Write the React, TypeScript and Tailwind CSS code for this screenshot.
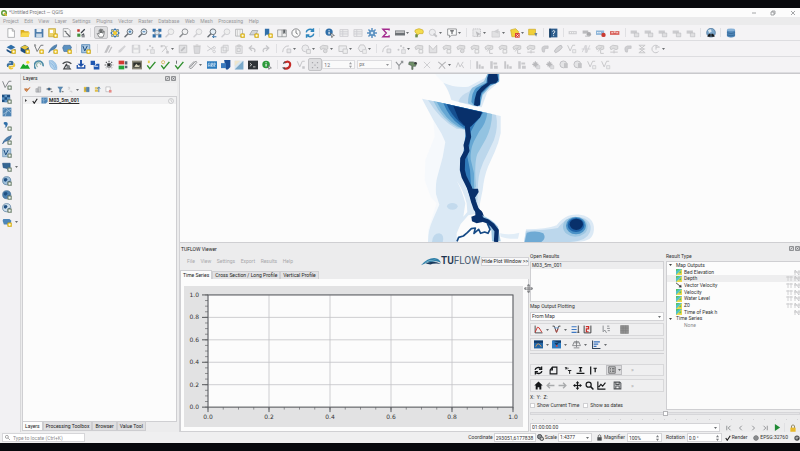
import type { ReactNode } from "react";

const B = "#2f6ea8";
const N = "#1f4f82";
const Y = "#f0c92c";
const G = "#c6c6c9";

const Badge = ({ fill = Y, stroke = "#b8961a" }: { fill?: string; stroke?: string }) => (
  <>
    <rect x="9" y="9" width="6.5" height="6.5" rx="1.2" fill={fill} stroke={stroke} strokeWidth=".8" />
    <path d="M12.2 10.5v3.6M10.4 12.3h3.6" stroke="#fff" strokeWidth="1.2" />
  </>
);
const GreyBadge = () => <Badge fill="#8fa08f" stroke="#6d7d6d" />;
const Lens = ({ c = "#6b7177", f = "#e4eef6" }: { c?: string; f?: string }) => (
  <>
    <circle cx="9.5" cy="6" r="4.6" fill={f} stroke={c} strokeWidth="1.5" />
    <path d="M6 9.5 1.6 14" stroke={c} strokeWidth="2.4" strokeLinecap="round" />
  </>
);
const Blob = ({ children }: { children?: ReactNode }) => (
  <g fill="none" stroke={G} strokeWidth="1.5">
    <path d="M1.5 5 6 2l8 1v5l-3 1-4-2-4 2z" fill="#dededf" />
    {children}
  </g>
);
const Tick = ({ children }: { children?: ReactNode }) => (
  <>
    <path d="M2 8.5 6 14 15 3" fill="none" stroke="#2f8f2d" strokeWidth="2.2" />
    {children}
  </>
);
const Globe = ({ f = "#9fc0da" }: { f?: string }) => (
  <>
    <circle cx="7.5" cy="7.5" r="6.5" fill={f} stroke="#3d688f" />
    <path d="M3 4l4-1 2 3-3 3-3-1zM9 9l4-2-1 5-3 1z" fill={N} />
  </>
);

const icons: Record<string, ReactNode> = {
  new: <path d="M3 1h7l3.5 3.5V15H3zM10 1v4h3.5" fill="#fff" stroke="#8b8d90" strokeWidth="1" />,
  open: <><path d="M1 3h5l1.5 2H14v9H1z" fill="#d8ab1e" /><path d="M3 7h13l-2.5 7H1z" fill="#f7d84a" /></>,
  save: <><path d="M1 1.5h14V15H1z" fill="#4c7cab" /><path d="M4 1.5h8v5H4z" fill="#e9eff5" /><path d="M3.5 9h9v6h-9z" fill="#c9d8e6" /></>,
  layout: <><path d="M1 1h11v13H1z" fill="#ecd36a" stroke="#b99b28" /><path d="M3 3h5v5H3z" fill="#fff" /><Badge /></>,
  layoutMgr: <><path d="M2 1h8l3 3v10H2z" fill="#f7f7f7" stroke="#85888b" /><path d="M6 7l7 7M4 5l3 1" stroke="#686b6e" strokeWidth="2" /></>,
  style: <><path d="M2 2h4v4H2z" fill="#c2352b" /><path d="M2 9h5v5H2z" fill="#42903f" /><path d="M8 8l6-6M9 12l4-3" stroke="#3b4148" strokeWidth="2" /><path d="M9 11h5v4H9z" fill="#8a8d90" /></>,
  hand: <path d="M5 14.5 2 9l1-1 2 2V3.5l1.3-.6L7 8V1.8h1.5V8l1-5.6 1.4.4L10.700 8.500 12 5l1.300.4L12.500 11 11 14.500z" fill="#fff" stroke="#46494c" strokeWidth="1" />,
  panSel: <><path d="M8 0l2.500 3.500h-5zM8 16l2.500-3.500h-5zM0 8l3.500-2.500v5zM16 8l-3.500-2.500v5z" fill={B} /><path d="M5 5h6v6H5z" fill={Y} /><path d="M2 2h4v4H2zM10 2h4v4h-4zM2 10h4v4H2zM10 10h4v4h-4z" fill="#54788f" /><path d="M3 3h2v2H3zM11 3h2v2h-2zM3 11h2v2H3zM11 11h2v2h-2z" fill="#e7d35e" /></>,
  zoomIn: <><Lens /><path d="M9.500 3.800v4.400M7.300 6h4.400" stroke={B} strokeWidth="1.400" /></>,
  zoomOut: <><Lens /><path d="M7.300 6h4.400" stroke={B} strokeWidth="1.400" /></>,
  zoomFull: <><path d="M1 1h5v5H1zM10 1h5v5h-5zM10 10h5v5h-5zM1 10h5v5H1z" fill={B} /><circle cx="8" cy="7.500" r="3.600" fill="#dce8f2" stroke="#6b7177" /></>,
  lensG: <Lens c="#cfcfd2" f="#eee" />,
  lens: <Lens c="#8b8e91" f="#f1f1f2" />,
  zoomLast: <><Lens /><path d="M15 14H9l2.500-3M9 14l2.500 2" stroke={B} strokeWidth="1.500" fill="none" /></>,
  newMap: <><path d="M1 2h11v11H1z" fill="#f3f3f3" stroke="#9a9c9e" /><path d="M4 2v11M8 2v11" stroke="#c0c0c0" /><Badge /></>,
  new3d: <><path d="M1 11 5 4h9l-3 7z" fill="#d4d5d7" stroke="#909396" /><Badge /></>,
  bookmark: <><path d="M3 1h7v12l-3.500-3L3 13z" fill={B} /><Badge /></>,
  marks: <><path d="M1 3h14v11H1z" fill="#eee" stroke="#7b7e81" /><path d="M8 3v11M10 3h3v6l-1.500-1.500L10 9z" fill="#53575b" stroke="#7b7e81" /></>,
  clock: <><circle cx="8" cy="8" r="6.600" fill="#fafafa" stroke="#77797c" strokeWidth="1.400" /><path d="M8 3.500V8l3 2" fill="none" stroke="#55585b" strokeWidth="1.200" /></>,
  refresh: <path d="M2 7a6 5.500 0 0 1 10.500-3M14 9a6 5.500 0 0 1-10.500 3M13.500.5V5H9M2.500 15.500V11H7" fill="none" stroke="#2f86bd" strokeWidth="2.400" />,
  identify: <><circle cx="6.500" cy="6.500" r="5.800" fill={B} /><path d="M6.500 3v1.500M6.500 6v4" stroke="#fff" strokeWidth="1.800" /><path d="M9 8l6 4-3 .5-1 3z" fill="#fff" stroke="#4c4f52" /></>,
  tableG: <path d="M1.500 2.500h13v11h-13zM1.500 6h13M1.500 9.500h13M6 2.500v11" fill="#ececee" stroke="#cfcfd2" strokeWidth="1.400" />,
  gear: <><path d="M8 0v16M0 8h16M2.300 2.300l11.400 11.400M13.700 2.300 2.300 13.700" stroke="#5e93c2" strokeWidth="2.400" /><circle cx="8" cy="8" r="5" fill="#5e93c2" /><circle cx="8" cy="8" r="2" fill="#dceaf5" /></>,
  sigma: <path d="M13 4V2H3l5.500 6L3 14h10v-2.500" fill="none" stroke="#a3298d" strokeWidth="2.200" />,
  ruler: <><path d="M0 4h16v8H0z" fill="#6d7175" /><path d="M1 6.500h14" stroke="#e4e4e4" strokeWidth="2" /></>,
  tip: <><path d="M2 3q6-4 12 0 2 3 0 6H8l-4 5V9Q0 6 2 3z" fill="#f4dc4d" stroke="#c8a92a" /><path d="M2 10h4v5H2z" fill="#6d8b4c" /></>,
  annG: <><circle cx="7" cy="7" r="5" fill="#ededef" stroke="#cbcbce" strokeWidth="1.500" /><path d="M9 9l5 5" stroke="#c3c3c6" strokeWidth="3" /></>,
  text: <><path d="M1 1.500h14v10H7l-3 3.500v-3.500H1z" fill="#fbfbfb" stroke="#7c7f82" strokeWidth="1.200" /><path d="M5 4.500h6M8 4.500v5" stroke="#3c3f42" strokeWidth="1.500" /></>,
  selG: <><path d="M1.500 1.500h12v12h-12z" fill="#e9e9eb" stroke="#c2c2c5" strokeDasharray="2 1" strokeWidth="1.500" /><path d="M6 5l8 5-4 1-1 4z" fill="#b9b9bc" /></>,
  formG: <><path d="M1.500 5.500h12v9h-12z" fill="#e1e1e3" stroke="#c9c9cc" /><path d="M4 5.500 12 1v8z" fill="#cfcfd2" /></>,
  desel: <><path d="M1 3l8-2 5 5-4 8H3z" fill="#f2d23a" stroke="#c7a524" /><path d="M8 8h7.500v7.500H8z" fill="#d94136" /><path d="M10 10l4 4M14 10l-4 4" stroke="#fff" /></>,
  selLoc: <><path d="M1 2h11v9H1z" fill="#f0cf38" stroke="#c7a524" /><path d="M10 8h5l-2 6z" fill="#6d8197" /></>,
  help: <><path d="M2 1h13v14H2z" fill="#2c5c8c" /><path d="M2 1h2.500v14H2z" fill="#173b61" /><path d="M7 5.500q2.500-3 4 0 0 2-2 2.500v2M9 11.500v1.500" stroke="#fff" strokeWidth="1.400" fill="none" /></>,
  labG: <><path d="M1 5h13v5H1z" fill="#cdcdd0" /><path d="M3 7.500h2M6.500 7.500h2M10 7.500h2" stroke="#f3f3f3" strokeWidth="2" /></>,
  pinG: <><path d="M1 4h9v5H1z" fill="#bababd" /><circle cx="11" cy="10" r="3.500" fill="#a9a9ac" /><path d="M5 12h7v2H5z" fill="#c4c4c7" /></>,
  labBlue: <><path d="M0 4h13v7H0z" fill="#8cb4d8" /><path d="M2 7.500h2M5.500 7.500h2" stroke="#fff" strokeWidth="2" /><circle cx="12" cy="11" r="3.500" fill="#c93a31" /></>,
  labRed: <><path d="M0 5h15v6H0z" fill="#d7605a" /><path d="M2 7.500h3M6 6.500h3M10 7.500h3" stroke="#fbe3e1" strokeWidth="1.800" /></>,
  labG2: <><path d="M1 4h10v5H1z" fill="#cbcbce" /><path d="M7 8h7v6H7z" fill="#dfdfe1" stroke="#bcbcbf" /></>,
  earthFind: <><circle cx="8" cy="7.500" r="7" fill="#7ba6cb" stroke="#446e95" /><path d="M3 3l5-1 1 4-4 2z" fill="#d8e5ef" /><path d="M2 14l2.500-5h3v5zM14 14l-2.500-5h-3v5z" fill="#17191b" /></>,
  db: <><path d="M1.500 3v10q6.500 4 13 0V3z" fill="#4f86b8" /><ellipse cx="8" cy="3" rx="6.500" ry="2.300" fill="#86b1d7" /><path d="M1.500 7.500q6.500 3 13 0M1.500 11q6.500 3 13 0" fill="none" stroke="#2d5f8d" /></>,

  dsm: <><path d="M1 5 8 1l7 4-7 4z" fill={B} /><path d="M1 8l7 4 7-4v3l-7 4-7-4z" fill={N} /><Badge /></>,
  geopkg: <><path d="M1 5 8 1l6 4v6l-6 4-7-4z" fill={N} /><path d="M1 5 8 2l6 3-6 4z" fill="#e8c63a" /><Badge /></>,
  shape: <><path d="M1 2l4 10 6-10h4" fill="none" stroke="#5c6064" strokeWidth="1.300" /><circle cx="1.500" cy="2" r="1.200" fill="#fff" stroke="#5c6064" /><Badge /></>,
  feather: <><path d="M1 14Q4 4 14 1q0 7-9 9z" fill="#5187b5" stroke={N} strokeWidth=".8" /><Badge /></>,
  memory: <><path d="M3 2h10l2 3-2 7H3L1 6z" fill="#5b91c0" stroke={N} strokeWidth=".7" /><Badge /></>,
  virtual: <><path d="M1 1h13v13H1z" fill="#aac7e0" stroke={B} /><path d="M3 3l3 8 4-8" fill="none" stroke={N} strokeWidth="1.600" /><Badge /></>,
  pencilsG: <path d="M2 14 8 2h4L6 14zM8 14l5-10 2 1-5 9z" fill="#c0c0c3" />,
  pencilG: <path d="M2 14l1-4L12 2l2 2-8 9z" fill="#d3d3d6" />,
  saveG: <><path d="M2 2h12v12H2z" fill="#dadadc" stroke="#c4c4c7" /><path d="M5 2h6v4H5zM4 9h8v5H4z" fill="#f3f3f3" /></>,
  ptsG: <><circle cx="4" cy="9" r="1.600" fill={G} /><circle cx="8" cy="3" r="1.600" fill={G} /><circle cx="12" cy="6" r="1.600" fill={G} /><path d="M9 9h6v6H9z" fill="#e8e8ea" stroke={G} /></>,
  vertG: <><path d="M2 3h6l4 9M3 13l9-10" fill="none" stroke={G} strokeWidth="1.500" /><path d="M1 2h3v3H1zM10 11h4v4h-4z" fill={G} /></>,
  multiG: <><path d="M2 2h12v12H2z" fill="#e1e1e3" stroke={G} strokeWidth="1.500" /><path d="M5 11l6-6" stroke="#bdbdc0" strokeWidth="2.500" /></>,
  trashG: <path d="M3 4h10l-1 11H4zM2 3h12M6 1.500h4" fill="#d9d9dc" stroke={G} strokeWidth="1.300" />,
  cutG: <path d="M2 3l9 7M2 11l10-6M13 10a2 2 0 1 0 .1 0M13 4a2 2 0 1 0 .1 0" fill="none" stroke={G} strokeWidth="1.400" />,
  copyG: <path d="M5 2h8v9H5zM2 5h8v9H2z" fill="#ececee" stroke={G} strokeWidth="1.300" />,
  pasteG: <path d="M3 3h10v12H3zM6 1.500h4v3H6zM5 7h5v5H5z" fill="#e8e8ea" stroke={G} strokeWidth="1.300" />,
  undoG: <path d="M12 13q3-7-7-6.500M8 2.500 3.500 6.500 8 11" fill="none" stroke={G} strokeWidth="2" />,
  redoG: <path d="M4 13q-3-7 7-6.500M8 2.500l4.500 4L8 11" fill="none" stroke={G} strokeWidth="2" />,
  arcG: <><path d="M1 13Q2 3 11 3" fill="none" stroke={G} strokeWidth="1.600" /><path d="M8 8h6v6H8z" fill="#e8e8ea" stroke={G} strokeWidth="1.400" /></>,
  circG: <><circle cx="7" cy="7" r="5.500" fill="#ececee" stroke={G} strokeWidth="1.400" /><path d="M9 9h6v6H9z" fill="#eee" stroke={G} strokeWidth="1.400" /></>,
  rectG: <><path d="M1.500 3h12v9h-12z" fill="#ececee" stroke={G} strokeWidth="1.500" /><path d="M8 8h7v7H8z" fill="#eee" stroke={G} strokeWidth="1.400" /></>,
  ngonG: <><path d="M5 1.500h6l3 5-3 5.500H5L2 7z" fill="#ececee" stroke={G} strokeWidth="1.500" /><path d="M9 9h6v6H9z" fill="#eee" stroke={G} /></>,
  blob: <Blob><path d="M8 9h6v5.500H8z" fill="#f2f2f2" /></Blob>,
  blob2: <Blob><path d="M5 12l6-8" /><path d="M9 9v6h5" /></Blob>,
  blob3: <Blob><circle cx="10" cy="11" r="3" fill="#dcdcde" /></Blob>,
  blob4: <Blob><path d="M2 13h12M8 9v6" /></Blob>,
  triG: <path d="M2 2v12h12V2L8 9z" fill="#e1e1e3" stroke={G} strokeWidth="1.500" />,
  capG: <path d="M3 9q-1-5 4-6h6v4H8l-1 6q-4 1-4-4z" fill="#cfcfd2" stroke="#bdbdc0" />,
  bandG: <path d="M4 14Q0 12 5 7t8-5q4 3-1 7t-8 5z" fill="#d5d5d8" stroke="#b9b9bc" strokeWidth="1.300" />,
  vG: <><path d="M1 2l4 9 4-9h4" fill="none" stroke={G} strokeWidth="1.500" /><path d="M9 9h5v5H9z" fill="#eee" stroke={G} /></>,
  splitG: <path d="M2 13 7 2v12M9 2v12l5-12M1 8h14" fill="none" stroke="#cfcfd2" strokeWidth="1.400" />,
  hourG: <path d="M3 2h10L5 8l8 6H3l8-6zM3 8h10" fill="none" stroke={G} strokeWidth="1.500" />,
  rotG: <path d="M12 12A6 6 0 1 1 12 4M8 3v6M8 5h6" fill="none" stroke={G} strokeWidth="1.600" />,

  python: <><path d="M8 1q4 0 4 3v4H6q-2 0-2 3H2Q0 7 3 5h5V4H4q0-3 4-3z" fill="#3a6f9e" /><path d="M8 15q-4 0-4-3V9h6q2 0 2-4h2q2 5-1 6H8v1h4q0 3-4 3z" fill="#edc83c" /></>,
  hill: <><path d="M0 14 5 6l4 3 3-2 4 7z" fill="#18a826" /><circle cx="12.500" cy="3.500" r="2.500" fill="#f1dc34" /></>,
  swirl: <><path d="M3 14A7 7 0 1 1 14.500 10" fill="none" stroke="#4d8ba6" strokeWidth="2.600" /><path d="M6 11a3.500 3.500 0 1 1 5-3" fill="none" stroke="#94b8ad" strokeWidth="2" /></>,
  flow: <path d="M2 1h5q8 4 7 14H9Q2 12 2 1zM3 4q6 3 8 10M6 2q6 4 7 11" fill="#b5d3ec" stroke="#7aaeda" />,
  gauge: <><path d="M1 6q7-6 14 0M3 14 7 7l6 7z" fill="none" stroke="#45484b" strokeWidth="2" /><circle cx="10" cy="11" r="3" fill="#7b7f83" /></>,
  dl: <path d="M6.500 0h3v6h4L8 11 2.500 6h4zM1 8v6h14V8h-2v3.500H3V8z" fill="#1b4fa8" />,
  imp: <><path d="M1 1h7v7H1zM6 6h9v9H6z" fill="#1d56b1" /><path d="M12 3 7 10h6" fill="none" stroke="#e7eefa" strokeWidth="1.500" /></>,
  nodes: <><path d="M8 1v14M1 8h14M3 3l10 10M13 3 3 13" stroke="#4b4e51" strokeDasharray="2 1.400" strokeWidth="1.700" /><circle cx="8" cy="8" r="2.500" fill="#2a2c2e" /></>,
  stack: <><path d="M1 1h9v6H1z" fill="#d23a32" /><path d="M1 9h9v6H1z" fill="#24a33a" /><path d="M11 2h4v5h-4zM11 9h4v4h-4z" fill="#556371" /></>,
  photo: <><path d="M0 1h16v14H0z" fill="#8a8778" /><path d="M2 4h12v8H2z" fill="#2e302c" /><path d="M4 10l3-4 3 3 2-2v4H4z" fill="#d5d0b8" /></>,
  t1: <Tick><path d="M3 1h3v4H3z" fill="#e6cd4d" /></Tick>,
  t2: <Tick><circle cx="5" cy="3.500" r="2.500" fill="none" stroke="#cfa32d" /></Tick>,
  t3: <Tick><path d="M4 1v5" stroke="#55595c" strokeWidth="1.300" /></Tick>,
  clip: <path d="M3 12 11 3q3-2 3 1L6 13q-3 2-4-1 0-2 2-4l6-6" fill="none" stroke="#8f9194" strokeWidth="1.500" />,
  arr: <><path d="M0 2h16v12H0z" fill="#2c7bbd" /><path d="M2 11V6l1.500-1.500L5 6v5M2 9h3M7 11V5h2v3H7l2 3M11 11V5h2v3h-2l2 3" fill="none" stroke="#e2effa" /></>,
  blue2: <><path d="M5 0h10v11l-4 4H8z" fill="#1c4f97" /><path d="M0 5h8v8H0z" fill="#3a79bd" /></>,
  grad: <><path d="M1 1h14v14H1z" fill="#d7e5ee" /><path d="M1 15 15 1v14z" fill="#7aa9ca" /><path d="M1 10 10 1H1z" fill="#eee5cc" /></>,
  term: <><path d="M0 1h16v14H0z" fill="#2e3236" /><path d="M3 5l3 2.500L3 10M8 11h4" fill="none" stroke="#e3e3e3" strokeWidth="1.300" /></>,
  infoG: <><circle cx="6.500" cy="7" r="6" fill="#2c9a3a" /><path d="M6.500 3.500V5M6.500 6.500v4" stroke="#fff" strokeWidth="1.800" /><path d="M10 8l5 5-3 0-1 2z" fill="#fff" stroke="#4c4f52" /></>,
  magnet: <><path d="M4 4 9 2.500q5 1 4 6T6 14l-3-1" fill="none" stroke="#c42a26" strokeWidth="3.400" /><path d="M2 5.500 5 3M1 12l4 2.500" stroke="#474a4d" strokeWidth="2" /></>,
  vtxG: <><path d="M2 2l4 9 4-9h4" fill="none" stroke={G} strokeWidth="1.600" /><path d="M10 10h4v4h-4z" fill={G} /></>,
  dotsG: <path d="M3 3h2v2H3zM11 3h2v2h-2zM3 11h2v2H3zM11 11h2v2h-2zM7 7h2v2H7z" fill="#a9a9ac" />,
  fork: <path d="M8 15V9L3 3M8 9l5-6M11 2h3v3" fill="none" stroke="#909396" strokeWidth="1.700" />,
  tree: <><path d="M2 3h6l6 2-2 5H8v5H6V9L1 7z" fill="#6f8f68" stroke="#55605a" /><circle cx="12" cy="5" r="2" fill="#3b4040" /></>,
  xG: <path d="M3 3l10 10M13 3 3 13" stroke="#cfcfd2" strokeWidth="1.600" />,
  yG: <path d="M2 3l6 5 6-5M3 14l5-6 5 6" fill="none" stroke="#b6b6b9" strokeWidth="1.700" />,
  trcG: <path d="M2 12 5 4l3 7 5-8M11 8l3 5" fill="none" stroke={G} strokeWidth="1.500" />,
  barG: <path d="M2 2h3v12H2zM6 7h3v7H6zM10 10h4v4h-4z" fill={G} />,
  barG2: <path d="M2 2h4v12H2zM7 4h6v3H7zM8 9h6v5H8z" fill="#c9c9cc" />,
  gearG: <><path d="M7 2v10M2 7h10M4 4l6 6M10 4l-6 6" stroke="#b9b9bc" strokeWidth="1.800" /><path d="M9 9h5v5H9z" fill="#dedee0" stroke={G} /></>,
  ballG: <><circle cx="7" cy="7" r="5.500" fill="#e4e4e6" stroke="#b9b9bc" strokeWidth="1.300" /><path d="M8 5h6v8H8z" fill="#c4c4c7" /></>,

  sShape: <><path d="M1 2l4 10 6-10h4" fill="none" stroke="#73777b" strokeWidth="1.400" /><GreyBadge /></>,
  sRaster: <><path d="M0 1h13v12H0z" fill={N} /><path d="M4 1h4v4H4zM8 5h5v4H8zM0 5h4v4H0zM4 9h4v4H4z" fill="#5f95c4" /><GreyBadge /></>,
  sMesh: <><path d="M1 1h14v14H1z" fill="#4f84b3" /><path d="M1 6l5-5 9 9M1 12l14-9M5 15 8 5" fill="none" stroke="#b0cce4" /></>,
  sCsv: <><path d="M3 2q7-2 6 4-1 4-5 5 3-3 1-5-3 0-2-4z" fill={B} /><GreyBadge /></>,
  sFeather: <><path d="M1 14Q4 4 15 1q-1 8-10 9z" fill="#4f82ae" stroke={N} /><GreyBadge /></>,
  sVirt: <><path d="M1 1h13v13H1z" fill="#a9c5dd" stroke="#628db3" /><path d="M3 3l3 8 4-8" fill="none" stroke={N} strokeWidth="1.600" /><GreyBadge /></>,
  sPg: <><path d="M1 2h12v7l-3 4-3-3-5-1z" fill="#366792" stroke={N} /><GreyBadge /></>,
  sWms: <><Globe /><GreyBadge /></>,
  sWcs: <><Globe f="#4b7fae" /><GreyBadge /></>,
  sWfs: <><Globe f="#cfdfeb" /><GreyBadge /></>,
  sMem: <><path d="M2 3h10l3 3-2 6H3L1 6z" fill="#4d86b8" /><Badge /></>,

  lBrush: <path d="M2 9l4 4 8-10-5 4zM1 6h6v4H3z" fill="#d8992b" stroke="#b7562c" />,
  lGroup: <path d="M2 6h5v8H2zM7 2h6v12H7z" fill="#c9cbcd" stroke="#8a8d90" />,
  lEye: <><path d="M1 7q6-6 12 0-6 6-12 0z" fill="#9ea3a8" stroke="#6b7075" /><circle cx="7" cy="7" r="2.500" fill="#2c5b87" /><path d="M11 13h4" stroke="#555" strokeWidth="2" /></>,
  lFilter: <><path d="M2 2h11L9 8v6H6V8z" fill="#5b8cb6" stroke="#44729b" /><path d="M11 13h4" stroke="#555" strokeWidth="2" /></>,
  lExp: <path d="M2 3h4v4H2M6 12h5v3" fill="none" stroke="#c3c3c6" strokeWidth="1.600" />,
  lDown: <><path d="M2 2h6v12H2z" fill="#e5bf3c" /><path d="M8 3h6v10H8zM5 5v6" fill="#5387b3" stroke="#38658e" /></>,
  lUp: <><path d="M2 3h7v3H2zM2 8h7v5H2z" fill="#dfbd49" /><path d="M11 14V4M8 6l3-4 3 4" fill="none" stroke="#3f73a1" strokeWidth="2" /></>,
  lDel: <><path d="M2 2h10v11H2z" fill="#fafafa" stroke="#929497" /><path d="M9 9h6v6H9z" fill="#e68a86" /></>,

  pTs: <><path d="M2 1v13h13" fill="none" stroke="#333" strokeWidth="1.500" /><path d="M2 13 6 4l3 1 5 8" fill="none" stroke="#d1332e" strokeWidth="1.700" /></>,
  pCs: <><path d="M1 2h3l4 11 4-11h3" fill="none" stroke="#444" strokeWidth="1.700" /><path d="M4 5h8" stroke="#6f9cd0" strokeWidth="1.500" /><path d="M6 8l2 5 3-6" fill="none" stroke="#c8463e" strokeWidth="1.400" /></>,
  pFlux: <><path d="M1 3h9M1 8h9M1 13h9" stroke="#3d78c4" strokeWidth="2" /><path d="M13 1v13M11 13h4" stroke="#4b4e52" strokeWidth="1.800" /></>,
  pVp: <><path d="M2 1v13h12V1" fill="none" stroke="#3a3c3e" strokeWidth="1.700" /><path d="M5 3h5v4H6v5h4" fill="none" stroke="#cc2f2a" strokeWidth="2.200" /></>,
  pSel: <path d="M2 1v11l3-3 3 5M9 2h4M9 6h5M10 10h4" fill="none" stroke="#85888b" strokeWidth="1.600" />,
  pGrid: <path d="M1 1h14v14H1zM1 5.500h14M1 10h14M5.500 1v14M10 1v14" fill="#929292" stroke="#7d7d7d" />,
  pMap: <><path d="M0 1h16v14H0z" fill="#2265a5" /><path d="M0 1h16v4H0z" fill="#123b69" /><path d="M3 12q2-6 5-5t5 5" fill="none" stroke="#e5a25a" strokeWidth="1.500" /></>,
  pMap2: <><path d="M0 1h16v14H0z" fill="#2c7bc2" /><path d="M0 1h16v4H4l4 5 4-5" fill="#123b69" /><path d="M7 9h3v3H7z" fill="#d2463f" /></>,
  pScale: <path d="M8 1v12M3 14h10M1 10l3-7h8l3 7zM4 5l8 0" fill="none" stroke="#7b7e81" strokeWidth="1.500" />,
  pHist: <><path d="M1 1v14h14" fill="none" stroke="#30435a" strokeWidth="1.800" /><path d="M3 2h11v2.500H3zM3 6h8v2.500H3zM3 10h5v2.500H3z" fill="#3671bd" /></>,
  kRef: <path d="M2 7a6 5 0 0 1 10-3M14 9a6 5 0 0 1-10 3M13.500 1v5H9M2.500 15v-5H7" fill="none" stroke="#16181a" strokeWidth="2.400" />,
  kClear: <path d="M6 2h8v12H2V7zM6 2v5H2" fill="none" stroke="#16181a" strokeWidth="2" />,
  kAx: <path d="M2 2l3 4M5 2 3 6M7 8h6M10 8v6M6 4h2" fill="none" stroke="#16181a" strokeWidth="1.700" />,
  kX: <path d="M1 13h14M5 3h6M8 3v7M6 9h4" fill="none" stroke="#16181a" strokeWidth="2.200" />,
  kY: <path d="M3 1v14M8 4h6M11 4v7" fill="none" stroke="#16181a" strokeWidth="2.200" />,
  kLeg: <path d="M1.500 1.500h13v13h-13zM4 5h2M8 5h5M4 8h2M8 8h5M4 11h2M8 11h5" fill="#c4c4c4" stroke="#5c5e60" strokeWidth="1.500" />,
  kHome: <path d="M8 1l7.500 7H13v7H9.500v-4h-3v4H3V8H.5z" fill="#16181a" />,
  kBack: <path d="M15 8H2M7 3 2 8l5 5" fill="none" stroke="#a9abad" strokeWidth="2.400" />,
  kFwd: <path d="M1 8h13M9 3l5 5-5 5" fill="none" stroke="#a9abad" strokeWidth="2.400" />,
  kPan: <><path d="M8 2v12M2 8h12" stroke="#16181a" strokeWidth="2.200" /><path d="M8 0l3 4H5zM8 16l3-4H5zM0 8l4-3v6zM16 8l-4-3v6z" fill="#16181a" /></>,
  kZoom: <><circle cx="6.500" cy="6.500" r="4.500" fill="none" stroke="#16181a" strokeWidth="2.200" /><path d="M10 10l5 5" stroke="#16181a" strokeWidth="2.600" /></>,
  kPlot: <path d="M1.500 1v13.500H15M3 11l4-5 3 3 5-6" fill="none" stroke="#16181a" strokeWidth="2" />,
  kSave: <path d="M2 2h10l2 2v10H2zM5 2v4h6V2M5 14V9h6v5" fill="none" stroke="#505356" strokeWidth="1.800" />,
};

const Icon = ({ n, className = "size-[10px]" }: { n: string; className?: string }) => (
  <svg viewBox="0 0 16 16" className={`${className} shrink-0`} aria-hidden="true">
    {icons[n]}
  </svg>
);

const Caret = ({ className = "text-[#6b6e71]" }: { className?: string }) => (
  <svg viewBox="0 0 6 4" className={`h-[2px] w-[3px] shrink-0 ${className}`} aria-hidden="true">
    <path d="M0 0h6L3 4z" fill="currentColor" />
  </svg>
);

const Grip = () => <span className="h-[9px] w-px shrink-0 bg-[#e0e0e3]" />;

function Tools({ items, pressed = "" }: { items: string; pressed?: string }) {
  return (
    <>
      {items.split(" ").map((raw, i) => {
        if (raw === "|" || raw === "||")
          return (
            <span key={i} className={`flex shrink-0 justify-center ${raw === "|" ? "w-[6px]" : "w-[8px]"}`}>
              <Grip />
            </span>
          );
        const menu = raw.endsWith(">");
        const name = menu ? raw.slice(0, -1) : raw;
        return (
          <button
            key={i}
            type="button"
            aria-label={name}
            className={`flex h-[13px] min-w-0 items-center justify-center ${menu ? "w-[19px] gap-px" : "w-[14px]"} ${
              name === pressed ? "rounded-xs border border-[#c4c4c7] bg-[#dedee0]" : ""
            }`}
          >
            <Icon n={name} />
            {menu && <Caret />}
          </button>
        );
      })}
    </>
  );
}

const bar = "flex h-4 items-center border-b border-[#dddde0] bg-[#f4f3f5] pl-1";

const field = "h-[9px] rounded-none border border-[#d3d3d6] bg-[#fdfdfd] px-px text-[5px] leading-[7px] text-[#333]";

function Drop({ label, value, className }: { label: string; value: string; className: string }) {
  return (
    <span className={`relative flex items-center ${className}`}>
      <select aria-label={label} className={`${field} w-full appearance-none`} defaultValue={value}>
        <option>{value}</option>
      </select>
      <span className="pointer-events-none absolute right-[3px] flex">
        <Caret />
      </span>
    </span>
  );
}

function Spin({ label, value, className }: { label: string; value: string; className: string }) {
  return (
    <span className={`relative flex items-center ${className}`}>
      <input aria-label={label} className={`${field} w-full`} defaultValue={value} />
      <svg viewBox="0 0 4 8" className="pointer-events-none absolute right-[3px] h-[6px] w-[3px]" aria-hidden="true">
        <path d="M0 3l2-3 2 3zM0 5l2 3 2-3z" fill="#7a7d80" />
      </svg>
    </span>
  );
}

function Check({ label, on = false }: { label: string; on?: boolean }) {
  return (
    <label className="relative flex items-center gap-[2px] whitespace-nowrap">
      <input
        type="checkbox"
        defaultChecked={on}
        className={`size-[5px] appearance-none ${on ? "" : "border border-[#d0d0d3] bg-white"}`}
      />
      {on && (
        <svg viewBox="0 0 8 8" className="pointer-events-none absolute left-0 size-[6px]" aria-hidden="true">
          <path d="M1 4l2 3 4-6" fill="none" stroke="#222" strokeWidth="1.500" />
        </svg>
      )}
      {label}
    </label>
  );
}

const FloatClose = () => (
  <svg viewBox="0 0 11 5" className="h-[5px] w-[11px]" aria-hidden="true">
    <path d="M.5.5h4v4h-4zM6.500.5h4v4h-4z" fill="#d4d4d6" stroke="#909295" />
    <path d="M1.500 3.500l2-2M7.500 1.500l2 2M9.500 1.500l-2 2" stroke="#6b6e71" strokeWidth=".7" />
  </svg>
);

function LayersDock() {
  const tabs = ["Layers", "Processing Toolbox", "Browser", "Value Tool"];
  return (
    <aside className="flex w-[158px] shrink-0 flex-col border-l border-[#d8d8da] bg-[#ececed] px-px">
      <div className="flex h-[9px] items-center justify-between px-px text-[#222]">
        <h2>Layers</h2>
        <FloatClose />
      </div>
      <div className="flex h-[13px] items-center gap-[1px] bg-[#f1f1f2]">
        {["lBrush", "lGroup", "lEye", "lFilter", "lExp", "lDown", "lUp", "lDel"].map((n) => (
          <button
            key={n}
            type="button"
            aria-label={n.slice(1)}
            className={`flex items-center justify-center gap-[2px] ${n === "lExp" ? "w-[14px]" : "w-[10px]"}`}
          >
            <Icon n={n} className="size-[7px]" />
            {n === "lExp" && <Caret />}
          </button>
        ))}
      </div>
      <ul className="flex-1 border border-[#cfcfd2] bg-[#fcfcfc]">
        <li className="flex h-[7px] items-center bg-[#f1f1f2] px-[2px]">
          <svg viewBox="0 0 4 6" className="h-[3px] w-[2px]" aria-hidden="true"><path d="M0 0l4 3-4 3z" fill="#444" /></svg>
          <span className="relative ml-[5px] flex size-[6px]">
            <input type="checkbox" defaultChecked aria-label="Show layer" className="size-[6px] appearance-none" />
            <svg viewBox="0 0 8 8" className="pointer-events-none absolute inset-0 size-[6px]" aria-hidden="true">
              <path d="M1 4l2 3 4-6" fill="none" stroke="#222" strokeWidth="1.500" />
            </svg>
          </span>
          <svg viewBox="0 0 16 16" className="mr-px ml-[3px] size-[7px]" aria-hidden="true">
            <path d="M1 1h14v10l-4 4H1z" fill="#4f86b8" /><path d="M1 5l6 3 8-5M6 1v14" stroke="#a9c8e2" fill="none" />
          </svg>
          <span className="font-bold text-[#2c2c2c] underline">M03_5m_001</span>
          <Icon n="clock" className="ml-auto size-[6px] opacity-60" />
        </li>
      </ul>
      <div className="flex h-[10px] items-start">
        {tabs.map((t, i) => (
          <button
            key={t}
            type="button"
            className={`h-[9px] border border-t-0 border-[#cdcdd0] px-[2px] text-[5px] leading-[8px] text-[#222] ${
              i === 0 ? "bg-[#fcfcfc]" : "bg-[#dfdfe1]"
            }`}
          >
            {t}
          </button>
        ))}
      </div>
    </aside>
  );
}

function MapCanvas() {
  return (
    <svg viewBox="180 74 620 168" preserveAspectRatio="xMidYMid slice" className="min-h-0 w-full flex-1 bg-[#fcfcfc]">
      <g transform="translate(400 70) scale(.33333)">
        <path d="M105 12H270L240 50 200 60 130 38z" fill="#f5f9fc" />
        <path d="M130 38Q165 54 205 50L262 20 292 40 262 66 245 112 228 110 154 90Q146 60 130 38z" fill="#dbe9f5" />
        <path d="M176 92Q184 74 205 66L222 50 240 80 236 108 176 96z" fill="#c3daed" />
        <path d="M204 100Q204 72 216 54L252 34 262 12 298 12 298 34 272 48 248 76 240 108 222 108z" fill="#8fc0e0" />
        <path d="M214 96Q216 66 228 54L258 38 264 12 296 12 296 36 268 48 246 72 240 108 222 106z" fill="#4a92c7" />
        <path d="M266 12H292L295 30 288 40 272 42 258 54 244 68 240 84 240 104 232 109 222 105 224 88 230 66 244 50 262 38 262 24z" fill="#08306b" />

        <path d="M66 86 100 150 104 200 76 270 74 330 92 380 110 400 84 480 84 516 140 516 150 200z" fill="#f6f9fc" />
        <path d="M66 86 302 138 302 190Q296 220 284 246L264 290Q252 320 248 360L240 400 238 430 205 436 182 462 170 490 170 516 84 516Q84 480 98 450L118 404 108 372Q106 340 112 320L128 262 136 216 124 190 100 150z" fill="#dbe9f5" />
        <path d="M170 332Q190 360 200 400L202 426 190 440 196 400Q186 360 170 332z" fill="#fcfcfc" />
        <path d="M84 90 288 135Q296 170 282 210L260 256Q236 300 234 340L232 400 214 400 198 330 204 180 170 176Q120 150 84 90z" fill="#bcd7ec" />
        <path d="M100 93 276 132Q276 170 258 206L232 252Q222 280 228 350L210 372 196 320 204 182 172 172Q126 148 100 93z" fill="#93c3e1" />
        <path d="M110 95 262 129Q258 160 238 184L222 214Q210 240 212 268L222 310 222 360 206 366 194 320 200 240 206 182 176 170Q134 146 110 95z" fill="#66a7d3" />
        <path d="M130 100 250 127Q240 146 226 160L212 186 210 220 202 260 210 300 214 360 204 360 190 320 188 270 198 178 180 166Q148 144 130 100z" fill="#2f79b8" />
        <path d="M140 102 246 126 240 140 222 160 210 170 192 168 178 156Q152 132 140 102z" fill="#154f90" />
        <path d="M160 108 246 127 240 142 222 160 212 170 192 166 176 148z" fill="#08306b" />
        <path
          d="M202 160 203 182 206 200 198 226 201 242 188 266 187 300 192 320 200 336 208 352 215 374 221 396 228 416 238 430"
          fill="none"
          stroke="#08306b"
          strokeWidth="15"
          strokeLinejoin="round"
        />
        <path d="M198 340 212 356 234 356 236 366 226 382 212 386z" fill="#08306b" />
        <path d="M226 418Q240 414 248 428L252 440 248 456 230 460 216 454 214 440 226 436z" fill="#08306b" />
        <path d="M246 436Q276 448 294 470L302 514H276L274 480z" fill="#9cc6e2" />
        <path d="M240 446 262 454 278 466 290 482 288 516" fill="none" stroke="#08306b" strokeWidth="13" strokeLinejoin="round" />
        <path
          d="M171 514 176 502 190 498 202 488 214 476 226 474 222 490 236 478 242 490 254 486 264 490 270 478 262 460"
          fill="none"
          stroke="#154a86"
          strokeWidth="5"
          strokeLinejoin="round"
        />
        <ellipse cx="157" cy="409" rx="16" ry="10" fill="#c3daed" />
        <path d="M96 516Q98 490 118 490 134 494 128 516z" fill="#bfd8ec" />
        <path d="M300 490Q330 496 358 488L354 506Q324 508 302 500z" fill="#e1edf7" />

        <path d="M378 478Q440 478 470 466C490 440 510 432 540 434 574 438 588 462 580 490 574 510 556 516 520 516H372z" fill="#dbe9f5" />
        <path d="M378 482Q440 480 474 474C494 446 512 440 538 441 566 444 578 466 570 486 562 504 546 514 510 516H372z" fill="#bcd7ec" />
        <path d="M380 488Q410 480 430 490 440 506 424 516H374z" fill="#6faad4" />
        <ellipse cx="526" cy="470" rx="37" ry="30" fill="#9cc6e2" />
        <ellipse cx="528" cy="467" rx="30" ry="26" fill="#4a92c7" />
        <ellipse cx="528" cy="465" rx="25" ry="21" fill="#1f63a8" />
        <ellipse cx="529" cy="463" rx="20" ry="17" fill="#08306b" />
      </g>
    </svg>
  );
}

function Plot() {
  const vals = [0, 0.2, 0.4, 0.6, 0.8, 1];
  const x = (v: number) => 24 + v * 305;
  const y = (v: number) => 122 - v * 113;
  const minor = Array.from({ length: 21 }, (_, i) => i / 20);
  return (
    <svg viewBox="0 0 339 142" preserveAspectRatio="none" className="min-h-0 w-full flex-1 bg-[#e2e2e3]">
      <rect x="24" y="9" width="305" height="113" fill="#fcfcfc" />
      {vals.map((v) => (
        <g key={v}>
          <path d={`M${x(v)} 9v113M24 ${y(v)}h305`} stroke="#c3c3c6" strokeWidth=".8" />
          <path d={`M${x(v)} 122v5M24 ${y(v)}h-6`} stroke="#55575a" strokeWidth="1" />
          <text x={x(v)} y="134" textAnchor="middle" className="fill-[#333] font-['DejaVu_Sans',sans-serif] text-[6px]">{v.toFixed(1)}</text>
          <text x="15" y={y(v) + 2} textAnchor="end" className="fill-[#333] font-['DejaVu_Sans',sans-serif] text-[6px]">{v.toFixed(1)}</text>
        </g>
      ))}
      {minor.map((v) => (
        <path key={v} d={`M${x(v)} 122v2.500M24 ${y(v)}h-3`} stroke="#66686b" strokeWidth=".7" />
      ))}
      <rect x="24" y="9" width="305" height="113" fill="none" stroke="#5a5c60" strokeWidth="1" />
    </svg>
  );
}

function Viewer() {
  const tabs = ["Time Series", "Cross Section / Long Profile", "Vertical Profile"];
  return (
    <section className="relative flex min-w-0 flex-1 flex-col">
      <h2 className="mt-[2px] h-[10px] px-px leading-[8px] text-[#222]">TUFLOW Viewer</h2>
      <div className="flex h-[12px] items-center">
        <nav className="flex w-[113px] justify-between pl-[7px] text-[#a8a8ab]">
          {["File", "View", "Settings", "Export", "Results", "Help"].map((m) => (
            <button key={m} type="button">{m}</button>
          ))}
        </nav>
        <div className="ml-auto flex items-center">
          <svg viewBox="0 0 60 26" className="h-[9px] w-[20px]" aria-hidden="true">
            <path d="M0 24Q22 0 44 3q12 2 16 14-10-6-20-4Q18 14 0 24z" fill="#2f7fa8" />
            <path d="M14 19Q34 8 60 20q-22-3-32 2z" fill="#17395c" />
            <path d="M8 18Q26 6 46 8q-22 2-38 10z" fill="#a5d3df" />
          </svg>
          <span className="text-[10px] leading-[10px] text-[#4a5c72]">
            <b className="font-semibold text-[#1f3550]">TU</b>FLOW
          </span>
          <button type="button" className="ml-px h-[9px] whitespace-nowrap border border-[#d2d2d5] bg-[#f7f7f8] text-[5px] leading-[7px] text-[#222]">
            Hide Plot Window &gt;&gt;
          </button>
        </div>
      </div>
      <div className="mt-[3px] flex h-[9px] items-end">
        {tabs.map((t, i) => (
          <button
            key={t}
            type="button"
            className={`border border-b-0 border-[#cfcfd2] px-[2px] text-[5px] text-[#222] ${
              i === 0 ? "h-[9px] bg-[#fcfcfc] leading-[8px]" : "h-[8px] bg-[#e2e2e4] leading-[7px]"
            }`}
          >
            {t}
          </button>
        ))}
      </div>
      <div className="flex min-h-0 flex-1 flex-col border border-t-0 border-[#d0d0d3] bg-[#fcfcfc] pt-[7px] pr-[5px] pb-1 pl-[3px]">
        <Plot />
      </div>
      <svg viewBox="0 0 16 16" className="absolute top-[41px] -right-1 size-[9px]" aria-hidden="true">
        <path d="M7 1v14M9.500 1v14M1 7h14M1 9.500h14" stroke="#77797c" strokeWidth="1.200" />
        <path d="M8 0l2.500 3h-5zM8 16l2.500-3h-5zM0 8l3-2.500v5zM16 8l-3-2.500v5z" fill="#77797c" />
      </svg>
    </section>
  );
}

const plotBar = "flex items-center border border-[#d8d8da] bg-[#efeff0] px-px";

function PlotTool({ n, menu = false, size = "w-[14px]" }: { n: string; menu?: boolean; size?: string }) {
  return (
    <button type="button" aria-label={n.slice(1)} className={`flex shrink-0 items-center justify-center gap-[3px] ${menu ? "w-[18px]" : size}`}>
      <Icon n={n} className="size-[9px]" />
      {menu && <Caret />}
    </button>
  );
}

const More = () => <span className="text-[6px] leading-[6px] text-[#a0a0a3]">»</span>;

function ResultsPanel() {
  return (
    <section className="flex w-[135px] shrink-0 flex-col pl-px text-[#333]">
      <h3 className="mt-[9px] h-[9px] leading-[8px]">Open Results</h3>
      <ul className="h-[41px] border border-[#cfcfd2] bg-[#fcfcfc]">
        <li className="h-[7px] bg-[#ededee] pl-px leading-[7px]">M03_5m_001</li>
      </ul>
      <h3 className="h-[10px] leading-[8px]">Map Output Plotting</h3>
      <Drop label="Map output plotting" value="From Map" className="w-full" />
      <div className={`${plotBar} mt-[2px] h-[13px]`}>
        <PlotTool n="pTs" menu />
        <PlotTool n="pCs" menu />
        <PlotTool n="pFlux" />
        <PlotTool n="pVp" size="w-[10px]" />
        <span className="w-[5px]" />
        <PlotTool n="pSel" size="w-[18px]" />
        <PlotTool n="pGrid" size="w-[18px]" />
      </div>
      <div className={`${plotBar} mt-[2px] h-[13px]`}>
        <PlotTool n="pMap" menu />
        <PlotTool n="pMap2" menu />
        <span className="w-[2px]" />
        <PlotTool n="pScale" menu />
        <span className="w-[2px]" />
        <PlotTool n="pHist" menu />
      </div>
      <div className="mt-[2px] h-px bg-[#d0d0d3]" />
      <div className={`${plotBar} mt-[10px] h-[12px]`}>
        <PlotTool n="kRef" size="w-[12px]" />
        <PlotTool n="kClear" size="w-[18px]" />
        <PlotTool n="kAx" size="w-[12px]" />
        <PlotTool n="kX" size="w-[13px]" />
        <PlotTool n="kY" size="w-[13px]" />
        <button type="button" aria-label="Legend" className="mr-[9px] ml-[6px] flex h-[10px] w-4 items-center justify-center gap-[2px] border border-[#bdbdc0] bg-[#dcdcde]">
          <Icon n="kLeg" className="size-[8px]" />
          <Caret />
        </button>
        <More />
      </div>
      <div className={`${plotBar} mt-[3px] h-[13px]`}>
        <PlotTool n="kHome" size="w-[12px]" />
        <PlotTool n="kBack" size="w-[12px]" />
        <PlotTool n="kFwd" size="w-[12px]" />
        <span className="w-[3px]" />
        <PlotTool n="kPan" size="w-[12px]" />
        <PlotTool n="kZoom" size="w-[12px]" />
        <PlotTool n="kPlot" size="w-[13px]" />
        <span className="w-[2px]" />
        <PlotTool n="kSave" size="w-[14px]" />
        <span className="w-[7px]" />
        <More />
      </div>
      <p className="mt-[2px] leading-[6px]">X:&nbsp; Y:&nbsp; Z:</p>
      <div className="mt-px flex h-[8px] items-center gap-[4px]">
        <Check label="Show Current Time" />
        <Check label="Show as dates" />
      </div>
    </section>
  );
}

const outputs = [
  { name: "Bed Elevation", marks: false },
  { name: "Depth", marks: true },
  { name: "Vector Velocity", marks: true },
  { name: "Velocity", marks: true },
  { name: "Water Level", marks: true },
  { name: "Z0", marks: true },
  { name: "Time of Peak h", marks: false },
];

const Swatch = () => (
  <svg viewBox="0 0 7 7" className="size-[6px] shrink-0" aria-hidden="true">
    <path d="M0 0h7v7H0z" fill="#4fc3c9" /><path d="M0 7 7 0v7z" fill="#f0da4a" /><path d="M0 3l4-3H0zM3 5l3-3v3z" fill="#57c268" />
  </svg>
);
const Opened = () => (
  <svg viewBox="0 0 6 4" className="h-[2px] w-[3px]" aria-hidden="true"><path d="M0 0h6L3 4z" fill="#444" /></svg>
);

function ResultTypes() {
  return (
    <section className="flex min-w-0 flex-1 flex-col pl-[2px] text-[#333]">
      <div className="mt-[3px] flex h-[6px] justify-end"><FloatClose /></div>
      <h3 className="h-[9px] leading-[8px]">Result Type</h3>
      <div className="flex-1 border border-r-0 border-[#cfcfd2] bg-[#fcfcfc]">
        <ul className="grid h-[67px] grid-rows-10">
          <li className="flex items-center gap-1 pl-[2px]"><Opened />Map Outputs</li>
          {outputs.map((o) => (
            <li key={o.name} className={`flex min-h-0 items-center gap-[2px] pl-[9px] ${o.name === "Depth" ? "bg-[#eeeeef]" : ""}`}>
              {o.name === "Vector Velocity" ? (
                <svg viewBox="0 0 7 7" className="size-[6px] shrink-0" aria-hidden="true">
                  <path d="M0 1l5 4" stroke="#333" strokeWidth="1" /><path d="M6.500 6.500 3 6l3-3z" fill="#333" />
                </svg>
              ) : (
                <Swatch />
              )}
              {o.name}
              <svg viewBox="0 0 14 7" className="ml-auto h-[7px] w-[14px]" aria-hidden="true">
                {o.marks && <path d="M2 1v5M5 1v5M0 2h7" fill="none" stroke="#c6c6c9" strokeWidth=".8" />}
                <path d="M9 6V1l4 5V1M8 3h6" fill="none" stroke="#bdbdc0" strokeWidth=".7" />
              </svg>
            </li>
          ))}
          <li className="flex items-center gap-1 pl-[2px]"><Opened />Time Series</li>
          <li className="flex items-center pl-[17px] text-[#8a8a8d]">None</li>
        </ul>
      </div>
    </section>
  );
}

function TimeBar() {
  const nav = [
    ["First", "M1 1v6M6 1 3 4l3 3"],
    ["Previous", "M5 1 2 4l3 3"],
    ["Next", "M3 1l3 3-3 3"],
    ["Last", "M2 1l3 3-3 3M7 1v6"],
  ];
  return (
    <div className="flex h-[22px] flex-col pl-px">
      <input
        type="range"
        aria-label="Time"
        defaultValue="50"
        className="mt-px h-[5px] w-full appearance-none bg-transparent [&::-webkit-slider-runnable-track]:h-[3px] [&::-webkit-slider-runnable-track]:border [&::-webkit-slider-runnable-track]:border-[#d6d6d9] [&::-webkit-slider-runnable-track]:bg-[#e4e4e6] [&::-webkit-slider-thumb]:-mt-[2px] [&::-webkit-slider-thumb]:size-[5px] [&::-webkit-slider-thumb]:appearance-none [&::-webkit-slider-thumb]:border [&::-webkit-slider-thumb]:border-[#b5b5b8] [&::-webkit-slider-thumb]:bg-white"
      />
      <div className="mt-[3px] flex h-px justify-between px-[2px]">
        {Array.from({ length: 25 }, (_, i) => (
          <span key={i} className="w-px bg-[#d3d3d6]" />
        ))}
      </div>
      <div className="mt-[3px] flex h-[9px] items-center">
        <Drop label="Time step" value="01:00:00.00" className="flex-1" />
        <div className="flex items-center pl-[3px]">
          {nav.map(([l, d]) => (
            <button key={l} type="button" aria-label={l} className="flex w-[12px] justify-center">
              <svg viewBox="0 0 8 8" className="size-[6px]" aria-hidden="true"><path d={d} fill="none" stroke="#77797c" strokeWidth="1" /></svg>
            </button>
          ))}
          <button type="button" aria-label="Play" className="flex w-[13px] justify-center">
            <svg viewBox="0 0 8 8" className="size-[7px]" aria-hidden="true"><path d="M1 0l6 4-6 4z" fill="#1f8a34" /></svg>
          </button>
          <Grip />
          <button type="button" aria-label="Lock" className="flex w-[15px] justify-center">
            <svg viewBox="0 0 8 10" className="h-2 w-[6px]" aria-hidden="true"><path d="M2 5V2q2-2.500 4 0v3" fill="none" stroke="#8b8157" strokeWidth="1.200" /><path d="M.5 4.500h7V10h-7z" fill="#e7b92c" /></svg>
          </button>
        </div>
      </div>
    </div>
  );
}

function StatusBar() {
  return (
    <footer className="flex h-[11px] items-center bg-[#efeff0] pl-[2px] text-[#333]">
      <span className="relative flex items-center">
        <svg viewBox="0 0 8 8" className="absolute left-[3px] size-[5px]" aria-hidden="true"><circle cx="3" cy="3" r="2.400" fill="none" stroke="#777" /><path d="M5 5l3 3" stroke="#777" /></svg>
        <input aria-label="Locate" placeholder="Type to locate (Ctrl+K)" className="h-[9px] w-[83px] border border-[#d6d6d9] bg-white pl-[10px] text-[5px] placeholder:text-[#8a8a8d]" />
      </span>
      <div className="ml-auto flex items-center">
        <label className="flex items-center gap-px">Coordinate<input className={`${field} w-[42px]`} defaultValue="293051,6177838" /></label>
        <svg viewBox="0 0 8 8" className="mx-px size-[7px]" aria-hidden="true"><circle cx="3" cy="3" r="2.500" fill="#8a8d90" stroke="#44474a" /><circle cx="5.500" cy="5.500" r="2" fill="#c8c8c8" stroke="#44474a" /></svg>
        <span className="mr-px">Scale</span>
        <Drop label="Scale" value="1:4377" className="w-[34px]" />
        <svg viewBox="0 0 8 10" className="mr-[2px] ml-[5px] h-[7px] w-[5px]" aria-hidden="true"><path d="M2 5V2q2-2.500 4 0v3" fill="none" stroke="#555" strokeWidth="1.200" /><path d="M.5 4.500h7V10h-7z" fill="#4b4e51" /></svg>
        <span className="mr-[2px]">Magnifier</span>
        <Spin label="Magnifier" value="100%" className="w-[35px]" />
        <span className="mr-[2px] ml-[4px]">Rotation</span>
        <Spin label="Rotation" value="0.0 °" className="w-[35px]" />
        <span className="ml-[3px]"><Check label="Render" on /></span>
        <button type="button" className="ml-[6px] flex items-center gap-px text-[5px]">
          <svg viewBox="0 0 8 8" className="size-[6px]" aria-hidden="true"><circle cx="4" cy="4" r="3" fill="#b5b7b9" stroke="#55585b" /><path d="M1 4h6M4 1v6" stroke="#55585b" strokeWidth=".7" /></svg>
          EPSG:32760
        </button>
        <svg viewBox="0 0 8 8" className="ml-[6px] size-[6px]" aria-hidden="true"><circle cx="4" cy="4" r="3.500" fill="#44474a" /><path d="M2 3h4M2 5h3" stroke="#eee" /></svg>
      </div>
    </footer>
  );
}

export default function App() {
  const menus = ["Project", "Edit", "View", "Layer", "Settings", "Plugins", "Vector", "Raster", "Database", "Web", "Mesh", "Processing", "Help"];
  const sources = ["sShape", "sRaster", "sMesh", "sCsv", "sFeather", "sVirt", "sPg", "sWms", "sWcs", "sWfs", "sMem"];
  return (
    <div className="flex h-screen flex-col overflow-hidden bg-[#08090d] py-2 font-['Roboto','Liberation_Sans',sans-serif] text-[5px] leading-[7px]">
      <header className="flex h-[9px] shrink-0 items-center bg-[#fcfcfc] pl-px text-[#7a7a7d]">
        <svg viewBox="0 0 8 8" className="mr-[2px] size-[6px]" aria-hidden="true"><circle cx="4" cy="4" r="3" fill="#fff" stroke="#5d9a32" strokeWidth="2" /><path d="M4 4l4 4" stroke="#dcb52a" strokeWidth="2" /></svg>
        <h1>*Untitled Project — QGIS</h1>
        <svg viewBox="0 0 44 6" className="mr-[4px] ml-auto h-[6px] w-[44px]" fill="none" stroke="#8e9093" strokeWidth=".8" aria-hidden="true">
          <path d="M0 3h4M19 2h3v3h-3zM20 2V1h3v3h-1M39 1l4 4M43 1l-4 4" />
        </svg>
      </header>
      <div className="h-2 shrink-0 bg-[#ebebec]">
        <nav className="flex h-2 w-[259px] items-center justify-between pl-[3px] text-[#98989b]">
          {menus.map((m) => (
            <button key={m} type="button">{m}</button>
          ))}
        </nav>
      </div>
      <div className="shrink-0">
        <div className={bar}>
          <div className="flex w-[734px] items-center">
            <Tools
              pressed="hand"
              items="new open save layout layoutMgr style | hand panSel zoomIn zoomOut zoomFull lensG lens lensG zoomLast lensG newMap new3d bookmark marks clock refresh | identify tableG tableG gear sigma ruler> tip annG> text> | selG> formG> desel> selLoc | help | labG pinG labBlue labRed | labG2 labG2 labG2 labG2 labG2 | earthFind | db"
            />
          </div>
        </div>
        <div className={bar}>
          <div className="flex w-[664px] items-center">
            <Tools items="dsm geopkg shape feather memory | virtual || pencilsG pencilG saveG ptsG vertG> multiG trashG cutG copyG pasteG undoG redoG | arcG> circG> blob3> rectG> ngonG> | arcG ptsG> blob triG blob blob3 blob blob2 blob blob2 blob4 capG bandG vG splitG blob2 blob4 capG hourG rotG>" />
          </div>
          <span className="ml-[104px]"><Grip /></span>
        </div>
        <div className={bar}>
          <div className="flex w-[609px] items-center">
            <Tools pressed="dotsG" items="python hill swirl flow gauge dl imp nodes stack photo t1 t2 t3 clip> arr blue2 grad term infoG | magnet vtxG dotsG" />
            <Spin label="Tolerance" value="12" className="mr-[2px] w-[33px] shrink-0 opacity-70" />
            <Drop label="Units" value="px" className="w-[35px] shrink-0 opacity-70" />
            <Tools items="fork tree xG yG> trcG | barG barG2 barG barG2 gearG gearG ballG ballG vG vG" />
          </div>
        </div>
      </div>
      <main className="flex min-h-0 flex-1 border-t border-[#c9c9cc] bg-[#ececed]">
        <div className="w-[20px] shrink-0 bg-[#f2f1f3] pt-[6px]">
          <div className="flex h-[147px] flex-col justify-between">
            {sources.map((s) => (
              <button key={s} type="button" aria-label={s.slice(1)} className="flex items-center gap-[3px] pl-[2px]">
                <Icon n={s} />
                {(s === "sPg" || s === "sMem") && <Caret />}
              </button>
            ))}
          </div>
        </div>
        <LayersDock />
        <div className="ml-px flex min-w-0 flex-1 flex-col border-l border-[#d3d3d6]">
          <MapCanvas />
          <div className="flex h-[190px] shrink-0 border-t border-[#cfcfd2]">
            <Viewer />
            <div className="flex w-[271px] shrink-0 flex-col">
              <div className="flex min-h-0 flex-1">
                <ResultsPanel />
                <ResultTypes />
              </div>
              <TimeBar />
            </div>
          </div>
        </div>
      </main>
      <StatusBar />
    </div>
  );
}
